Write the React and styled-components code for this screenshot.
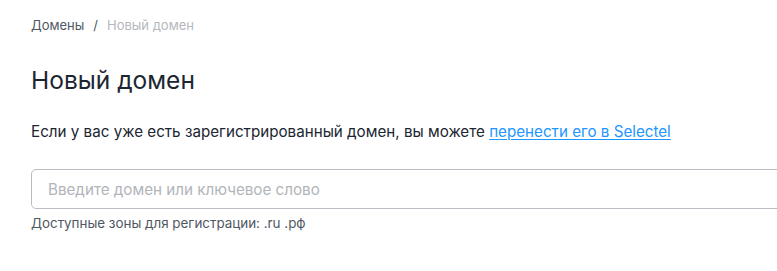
import styled, { createGlobalStyle } from "styled-components";

const GlobalStyle = createGlobalStyle`
  html, body {
    margin: 0;
    padding: 0;
    background: #fff;
    overflow: hidden;
  }
  body {
    font-family: Inter, "Noto Sans", sans-serif;
    color: #1b2631;
  }
  #root {
    width: 777px;
    overflow: hidden;
  }
`;

const Page = styled.div`
  padding: 16px 0 0 31px;
  width: 820px;
`;

const Crumbs = styled.nav`
  display: flex;
  align-items: center;
  gap: 9px;
  font-size: 13px;
  line-height: 18px;
`;

const Crumb = styled.span`
  color: ${(p) => (p.$current ? "#b4b8bd" : "#4f5862")};
`;

const Sep = styled.span`
  color: #4f5862;
`;

const Title = styled.h1`
  margin: 30px 0 0;
  font-size: 24.5px;
  font-weight: 400;
  line-height: 32px;
  color: #1b2631;
`;

const Lead = styled.p`
  margin: 26px 0 0;
  font-size: 15.2px;
  line-height: 20px;
  color: #1b2631;

  a {
    color: #2196ff;
    text-decoration: underline;
    text-underline-offset: 2px;
  }
`;

const Field = styled.div`
  margin-top: 27px;
  height: 40px;
  border: 1px solid #b9bdc3;
  border-radius: 5px;
  display: flex;
  align-items: center;
  padding: 0 16px;
  box-sizing: border-box;
`;

const Input = styled.input`
  border: 0;
  outline: none;
  flex: 1;
  font-family: inherit;
  font-size: 15.2px;
  color: #1b2631;
  padding: 0;
  background: transparent;

  &::placeholder {
    color: #b1b5ba;
  }
`;

const Hint = styled.div`
  margin-top: 5px;
  font-size: 13.4px;
  line-height: 18px;
  color: #4f5862;
`;

export default function App() {
  return (
    <>
      <GlobalStyle />
      <Page>
        <Crumbs>
          <Crumb>Домены</Crumb>
          <Sep>/</Sep>
          <Crumb $current>Новый домен</Crumb>
        </Crumbs>
        <Title>Новый домен</Title>
        <Lead>
          Если у вас уже есть зарегистрированный домен, вы можете{" "}
          <a href="#">перенести его в Selectel</a>
        </Lead>
        <Field>
          <Input placeholder="Введите домен или ключевое слово" />
        </Field>
        <Hint>Доступные зоны для регистрации: .ru .рф</Hint>
      </Page>
    </>
  );
}
